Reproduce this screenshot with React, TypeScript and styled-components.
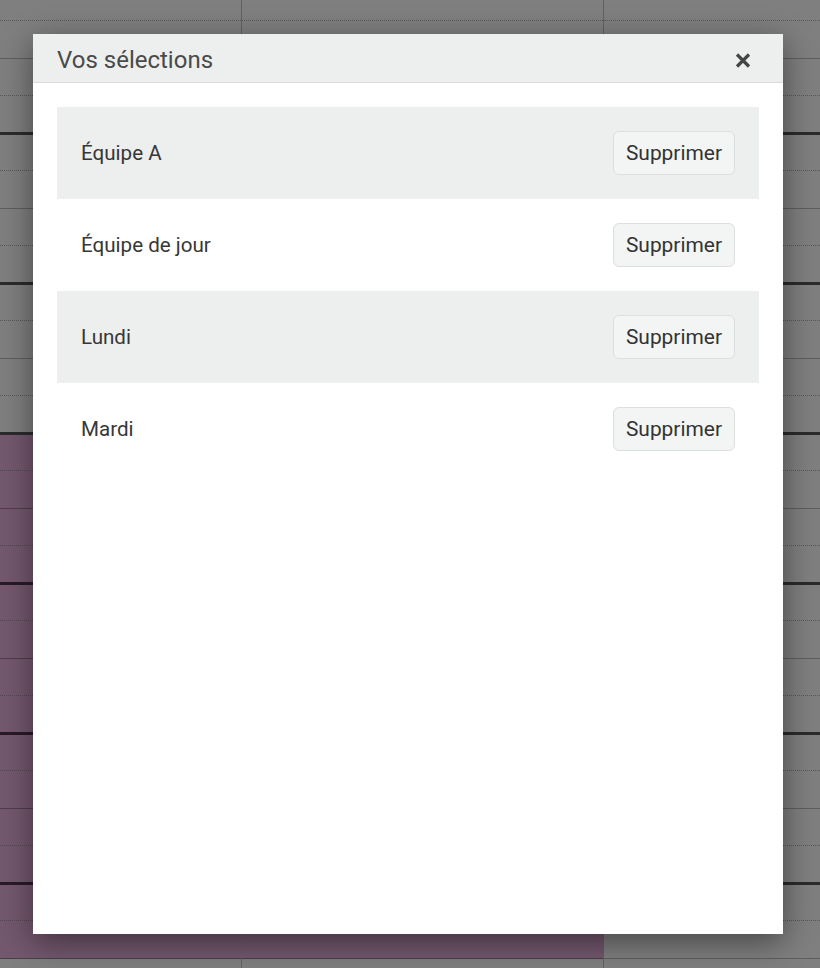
import styled, { createGlobalStyle } from "styled-components";

const GlobalStyle = createGlobalStyle`
	html, body {
		margin: 0;
		padding: 0;
	}
	body {
		font-family: Roboto, "Liberation Sans", sans-serif;
		background: #ffffff;
	}
`;

type LineKind = "dotted" | "solid" | "thick";

// horizontal lines of the planning behind the dialog, every 37.5px
const lines: { end: number; kind: LineKind }[] = [];
for (let k = 0; k < 26; k++) {
	const kinds: LineKind[] = ["dotted", "solid", "dotted", "thick"];
	const kind = kinds[k % 4];
	const y = Math.round(20 + 37.5 * k);
	lines.push({ end: y + (kind === "thick" ? 2 : 1), kind });
}

const columns = [
	{ width: 242, tinted: true },
	{ width: 362, tinted: true },
	{ width: 216, tinted: false },
];

const selections = ["Équipe A", "Équipe de jour", "Lundi", "Mardi"];

function App() {
	return (
		<>
			<GlobalStyle />
			<Page>
				<Planning>
					{columns.map((col, ci) => (
						<Column key={ci} $width={col.width} $last={ci === columns.length - 1}>
							{lines.map((line, i) => {
								const prev = i === 0 ? 0 : lines[i - 1].end;
								const tinted = col.tinted && prev >= 432;
								return (
									<Slot
										key={i}
										$kind={line.kind}
										$tinted={tinted}
										style={{ height: line.end - prev }}
									/>
								);
							})}
						</Column>
					))}
				</Planning>
				<Backdrop>
					<Dialog>
						<Header>
							<Title>Vos sélections</Title>
							<CloseButton aria-label="Fermer">
								<svg width="16" height="15" viewBox="0 0 16 15">
									<path
										d="M2 1.5 L14 13.5 M14 1.5 L2 13.5"
										stroke="#454545"
										strokeWidth="3.2"
										strokeLinecap="butt"
									/>
								</svg>
							</CloseButton>
						</Header>
						<Body>
							{selections.map((label, i) => (
								<SelectionRow key={label} $striped={i % 2 === 0}>
									<Label>{label}</Label>
									<RemoveButton>Supprimer</RemoveButton>
								</SelectionRow>
							))}
						</Body>
					</Dialog>
				</Backdrop>
			</Page>
		</>
	);
}

const Page = styled.div`
	position: relative;
	width: 100%;
	height: 968px;
	overflow: hidden;
`;

const Planning = styled.div`
	display: flex;
	height: 100%;
`;

const Column = styled.div<{ $width: number; $last: boolean }>`
	width: ${(p) => p.$width}px;
	flex: ${(p) => (p.$last ? "1" : "none")};
	display: flex;
	flex-direction: column;
	box-sizing: border-box;
	border-right: ${(p) => (p.$last ? "none" : "1px solid #c4c4c4")};
`;

const Slot = styled.div<{ $kind: LineKind; $tinted: boolean }>`
	box-sizing: border-box;
	flex: none;
	background: ${(p) => (p.$tinted ? "#e6b0dc" : "#ffffff")};
	border-bottom: ${(p) =>
		p.$kind === "thick"
			? `3px solid ${p.$tinted ? "#543450" : "#565656"}`
			: p.$kind === "solid"
			? `1px solid ${p.$tinted ? "#9c7a97" : "#bcbcbc"}`
			: `1px dotted ${p.$tinted ? "#a88aa4" : "#b0b0b0"}`};
`;

const Backdrop = styled.div`
	position: absolute;
	inset: 0;
	background: rgba(0, 0, 0, 0.5);
	display: flex;
	padding: 34px 37px 34px 33px;
	box-sizing: border-box;
`;

const Dialog = styled.div`
	flex: 1;
	display: flex;
	flex-direction: column;
	background: #ffffff;
	box-shadow: 0 8px 30px rgba(0, 0, 0, 0.45);
`;

const Header = styled.div`
	height: 49px;
	box-sizing: border-box;
	display: flex;
	align-items: center;
	justify-content: space-between;
	padding: 4px 32px 0 24px;
	background: #ecefee;
	border-bottom: 1px solid #d9dcdb;
`;

const Title = styled.h4`
	margin: 0;
	font-size: 24px;
	font-weight: 400;
	color: #4a4a4a;
`;

const CloseButton = styled.button`
	border: none;
	background: none;
	padding: 0;
	display: flex;
	cursor: pointer;
`;

const Body = styled.div`
	flex: 1;
	padding: 24px;
	display: flex;
	flex-direction: column;
`;

const SelectionRow = styled.div<{ $striped: boolean }>`
	height: 92px;
	box-sizing: border-box;
	display: flex;
	align-items: center;
	justify-content: space-between;
	padding: 0 24px;
	background: ${(p) => (p.$striped ? "#ecefee" : "transparent")};
`;

const Label = styled.span`
	font-size: 20.6px;
	color: #373737;
`;

const RemoveButton = styled.button`
	height: 44px;
	padding: 0 12px;
	font-family: Roboto, "Liberation Sans", sans-serif;
	font-size: 20.9px;
	color: #333333;
	background: #f3f4f4;
	border: 1px solid #dcdfdf;
	border-radius: 6px;
	cursor: pointer;
`;

export default App;
